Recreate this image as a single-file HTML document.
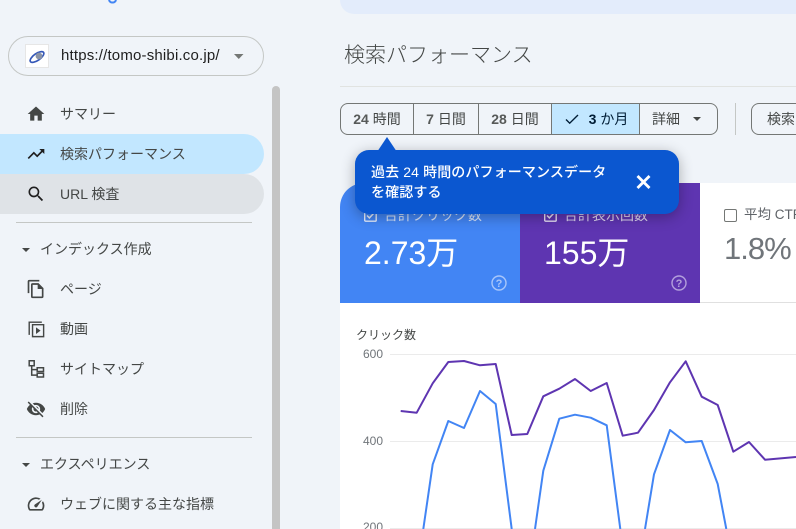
<!DOCTYPE html>
<html lang="ja"><head><meta charset="utf-8"><style>
*{box-sizing:border-box}
html,body{margin:0;padding:0;width:796px;height:529px;overflow:hidden}
body{background:#f0f4f9;position:relative;font-family:"Liberation Sans","Noto Sans CJK JP",sans-serif;color:#444746}
.a{position:absolute;white-space:nowrap}
.n{font-size:14px;line-height:20px;left:60px;color:#444746}
.i{position:absolute;left:26px;width:20px;height:20px}
.hr{position:absolute;left:16px;width:236px;height:1px;background:#c4c7c5}
.chip{position:absolute;top:103px;height:32px;border:1px solid #747775;font-size:14px;line-height:30px;text-align:center;color:#444746;margin-left:-1px;white-space:nowrap;overflow:hidden}
.chip b{font-weight:700;color:#575a59}
</style></head><body>
<div class="a" style="left:340px;top:0;width:456px;height:14px;background:#e3ecfb;border-bottom-left-radius:14px"></div>
<svg class="a" style="left:108px;top:0" width="10" height="5"><path d="M1 0C2 3.400 7 3.400 8 0" fill="none" stroke="#4285f4" stroke-width="2"/></svg>

<div class="a" style="left:8px;top:36px;width:256px;height:40px;border:1px solid #c4c7c5;border-radius:20px"></div>
<div class="a" style="left:25px;top:44px;width:24px;height:24px;background:#fff;border:1px solid #e6e6e6"></div>
<svg class="a" style="left:25px;top:44px" width="24" height="24"><ellipse cx="12" cy="13" rx="8" ry="3.400" transform="rotate(-35 12 13)" fill="none" stroke="#3558b8" stroke-width="1.700"/><circle cx="14" cy="12" r="3.400" fill="#8a93a5"/></svg>
<div class="a" style="left:61px;top:46px;font-size:15px;line-height:20px;color:#1f1f1f;letter-spacing:.18px">https://tomo-shibi.co.jp/</div>
<svg class="a" style="left:234px;top:54px" width="10" height="5"><path d="M0 0h9.500L4.750 5z" fill="#747775"/></svg>
<div class="a" style="left:272px;top:86px;width:8px;height:443px;background:#c4c4c4;border-radius:4px 4px 0 0"></div>

<div class="a" style="left:0;top:134px;width:264px;height:40px;background:#c2e7ff;border-radius:0 20px 20px 0"></div>
<div class="a" style="left:0;top:174px;width:264px;height:40px;background:#dfe3e7;border-radius:0 20px 20px 0"></div>

<svg class="i" style="top:104px" viewBox="0 0 24 24"><path d="M10 20v-6h4v6h5v-8h3L12 3 2 12h3v8z" fill="#444746"/></svg>
<div class="a n" style="top:104px">サマリー</div>
<svg class="i" style="top:144px" viewBox="0 0 24 24"><path d="M16 6l2.290 2.290-4.880 4.880-4-4L2 16.590 3.410 18l6-6 4 4 6.300-6.290L22 12V6z" fill="#1f1f1f"/></svg>
<div class="a n" style="top:144px">検索パフォーマンス</div>
<svg class="i" style="top:184px" viewBox="0 0 24 24"><path d="M15.500 14h-.79l-.28-.27A6.471 6.471 0 0 0 16 9.500 6.500 6.500 0 1 0 9.500 16c1.610 0 3.090-.59 4.230-1.570l.27.28v.79l5 4.990L20.490 19l-4.990-5zm-6 0C7.010 14 5 11.990 5 9.500S7.010 5 9.500 5 14 7.010 14 9.500 11.990 14 9.500 14z" fill="#1f1f1f"/></svg>
<div class="a n" style="top:184px">URL 検査</div>
<div class="hr" style="top:222px"></div>

<svg class="a" style="left:22px;top:248px" width="8" height="4"><path d="M0 0h8L4 4z" fill="#444746"/></svg>
<div class="a n" style="top:239px;left:40px">インデックス作成</div>
<svg class="i" style="top:279px" viewBox="0 0 24 24"><path d="M16 1H4a2 2 0 0 0-2 2v14h2V3h12zm-1 4H8a2 2 0 0 0-2 2v14a2 2 0 0 0 2 2h11a2 2 0 0 0 2-2V11zM8 21V7h6v5h5v9z" fill="#444746"/></svg>
<div class="a n" style="top:279px">ページ</div>
<svg class="i" style="top:319px;left:25.500px" viewBox="0 0 24 24"><path d="M3 19V3h16v1.600H4.700V19zM7 6h15v16H7zm1.700 1.700v12.600h11.600V7.700zM12 10l5.500 4-5.500 4z" fill="#444746"/></svg>
<div class="a n" style="top:319px">動画</div>
<svg class="a" style="left:26px;top:359px" width="20" height="20" viewBox="0 0 20 20"><path d="M3.200 1.700h5v5h-5zM11.200 8.700h6.300v3.800h-6.300zM11.200 14.200h6.300v3.800h-6.300zM5.700 6.700v9.400h5.500M5.700 10.600h5.500" fill="none" stroke="#444746" stroke-width="1.500"/></svg>
<div class="a n" style="top:359px">サイトマップ</div>
<svg class="i" style="top:399px;left:26px" viewBox="0 0 24 24"><path d="M12 7c2.760 0 5 2.240 5 5 0 .65-.13 1.260-.36 1.830l2.920 2.920c1.510-1.260 2.700-2.890 3.430-4.750-1.730-4.390-6-7.500-11-7.500-1.400 0-2.740.25-3.980.7l2.160 2.160C10.740 7.130 11.350 7 12 7zM2 4.270l2.280 2.280.46.46C3.080 8.300 1.780 10.020 1 12c1.730 4.390 6 7.500 11 7.500 1.550 0 3.030-.3 4.380-.84l.42.42L19.730 22 21 20.730 3.270 3 2 4.270zM7.530 9.800l1.550 1.550c-.05.21-.08.43-.08.65 0 1.660 1.340 3 3 3 .22 0 .44-.03.650-.08l1.550 1.550c-.67.33-1.410.53-2.200.53-2.760 0-5-2.240-5-5 0-.79.2-1.530.53-2.200zm4.310-.78l3.150 3.150.02-.16c0-1.660-1.340-3-3-3l-.17.010z" fill="#444746"/></svg>
<div class="a n" style="top:399px">削除</div>
<div class="hr" style="top:437px"></div>

<svg class="a" style="left:22px;top:463px" width="8" height="4"><path d="M0 0h8L4 4z" fill="#444746"/></svg>
<div class="a n" style="top:454px;left:40px">エクスペリエンス</div>
<svg class="i" style="top:494px" viewBox="0 0 24 24"><path d="M20.380 8.570l-1.230 1.850a8 8 0 0 1-.22 7.580H5.070A8 8 0 0 1 15.580 6.850l1.850-1.230A10 10 0 0 0 3.350 19a2 2 0 0 0 1.720 1h13.850a2 2 0 0 0 1.740-1 10 10 0 0 0-.27-10.440zm-9.790 6.840a2 2 0 0 0 2.830 0l5.660-8.490-8.490 5.660a2 2 0 0 0 0 2.830z" fill="#444746"/></svg>
<div class="a n" style="top:494px">ウェブに関する主な指標</div>

<div class="a" style="left:344px;top:40px;font-size:21px;line-height:32px;color:#444746;font-weight:300">検索パフォーマンス</div>
<div class="a" style="left:340px;top:86px;width:456px;height:1px;background:#e1e3e1"></div>

<div class="chip" style="left:341px;width:74px;border-radius:8px 0 0 8px"><b>24</b> 時間</div>
<div class="chip" style="left:414px;width:66px"><b>7</b> 日間</div>
<div class="chip" style="left:479px;width:74px"><b>28</b> 日間</div>
<div class="chip" style="left:552px;width:89px;background:#c2e7ff;color:#001d35;padding-left:26px"><b style="color:#001d35">3</b> か月</div>
<svg class="a" style="left:564px;top:111px" width="16" height="16" viewBox="0 0 16 16"><path d="M2 8.500l3.700 3.700L14 4" fill="none" stroke="#001d35" stroke-width="1.400"/></svg>
<div class="chip" style="left:640px;width:79px;border-radius:0 8px 8px 0;text-align:left;padding-left:12px">詳細</div>
<svg class="a" style="left:693px;top:117px" width="8" height="4"><path d="M0 0h8L4 4z" fill="#444746"/></svg>
<div class="a" style="left:735px;top:103px;width:1px;height:32px;background:#c4c7c5"></div>
<div class="chip" style="left:752px;width:70px;border-radius:8px 0 0 8px;text-align:left;padding-left:15px">検索タイプ</div>

<div class="a" style="left:340px;top:303px;width:456px;height:226px;background:#fff"></div>
<div class="a" style="left:700px;top:183px;width:96px;height:120px;background:#fff;border-bottom:1px solid #e0e0e0"></div>
<div class="a" style="left:340px;top:183px;width:180px;height:120px;background:#4285f4;border-top-left-radius:24px"></div>
<div class="a" style="left:520px;top:183px;width:180px;height:120px;background:#5e35b1"></div>

<svg class="a" style="left:364px;top:209px" width="13" height="13"><rect x=".7" y=".7" width="11.500" height="11.500" rx="1" fill="none" stroke="#e3ecfd" stroke-width="1.400"/><path d="M3 6.500l2.400 2.400L10 4" fill="none" stroke="#e3ecfd" stroke-width="1.500"/></svg>
<div class="a" style="left:384px;top:205px;font-size:14px;line-height:20px;color:#d7e4fb">合計クリック数</div>
<div class="a" style="left:364px;top:233px;font-size:32px;line-height:40px;color:#fff">2.73万</div>
<svg class="a" style="left:491px;top:275px" width="16" height="16" viewBox="0 0 16 16"><circle cx="8" cy="8" r="7" fill="none" stroke="#a9c6fa" stroke-width="1.400"/><text x="8" y="12" text-anchor="middle" font-size="11" font-weight="700" font-family="Liberation Sans" fill="#a9c6fa">?</text></svg>

<svg class="a" style="left:544px;top:209px" width="13" height="13"><rect x=".7" y=".7" width="11.500" height="11.500" rx="1" fill="none" stroke="#e5dff3" stroke-width="1.400"/><path d="M3 6.500l2.400 2.400L10 4" fill="none" stroke="#e5dff3" stroke-width="1.500"/></svg>
<div class="a" style="left:564px;top:205px;font-size:14px;line-height:20px;color:#ddd5ef">合計表示回数</div>
<div class="a" style="left:544px;top:233px;font-size:32px;line-height:40px;color:#fff">155万</div>
<svg class="a" style="left:671px;top:275px" width="16" height="16" viewBox="0 0 16 16"><circle cx="8" cy="8" r="7" fill="none" stroke="#b3a0dc" stroke-width="1.400"/><text x="8" y="12" text-anchor="middle" font-size="11" font-weight="700" font-family="Liberation Sans" fill="#b3a0dc">?</text></svg>

<div class="a" style="left:724px;top:209px;width:13px;height:13px;border:1.300px solid #747775;border-radius:2px"></div>
<div class="a" style="left:744px;top:205px;font-size:13.500px;line-height:20px;color:#5f6368">平均 CTR</div>
<div class="a" style="left:724px;top:229px;font-size:31px;line-height:40px;letter-spacing:-1px;color:#70757a">1.8%</div>

<div class="a" style="left:356px;top:326px;font-size:12px;line-height:18px;color:#444746">クリック数</div>
<div class="a" style="left:363px;top:347px;font-size:12px;line-height:14px;color:#70757a">600</div>
<div class="a" style="left:363px;top:434px;font-size:12px;line-height:14px;color:#70757a">400</div>
<div class="a" style="left:363px;top:520px;font-size:12px;line-height:14px;color:#70757a">200</div>
<svg class="a" style="left:0;top:0" width="796" height="529">
<path d="M390 354.500H796M390 441.500H796M390 528.500H796" stroke="#ebebeb" stroke-width="1"/>
<polyline fill="none" stroke="#4285f4" stroke-width="2" stroke-linejoin="round" points="423.300,529 432.700,464.300 448.300,421 464,428 480,391 495.700,404 511.700,529"/>
<polyline fill="none" stroke="#4285f4" stroke-width="2" stroke-linejoin="round" points="535,529 543.300,470.700 559.300,418.700 575,414.700 590.700,417.700 606.700,425.300 620.300,529"/>
<polyline fill="none" stroke="#4285f4" stroke-width="2" stroke-linejoin="round" points="645,529 654,474.300 670,430 685.700,442.300 701.700,441 717.700,484 726.300,529"/>
<polyline fill="none" stroke="#5e35b1" stroke-width="2" stroke-linejoin="round" points="400.700,411 416.700,412.700 432.700,383.300 448.300,362 464,361 480,365.300 495.700,364 511.700,435 527.300,434 543.300,396.300 559.300,388.700 575,379 590.700,391 606.700,383 622.700,435.700 638,432.700 654,410 670,382.300 685.700,361.300 701.700,396.700 717.700,405 733.300,451.700 749,442 765,459.700 796,457"/>
</svg>

<div class="a" style="left:355px;top:150px;width:324px;height:64px;background:#0b57d0;border-radius:14px;box-shadow:0 3px 14px rgba(0,0,0,.3)"></div>
<svg class="a" style="left:378px;top:137px" width="18" height="14"><path d="M0 13.500L9 0l9 13.500z" fill="#0b57d0"/></svg>
<div class="a" style="left:371px;top:162px;font-size:14px;line-height:20px;color:#fff;font-weight:500;letter-spacing:.12px">過去 24 時間のパフォーマンスデータ<br>を確認する</div>
<svg class="a" style="left:635px;top:174px" width="17" height="16"><path d="M2.500 2l12 12M14.500 2l-12 12" stroke="#fff" stroke-width="2.800"/></svg>
</body></html>
